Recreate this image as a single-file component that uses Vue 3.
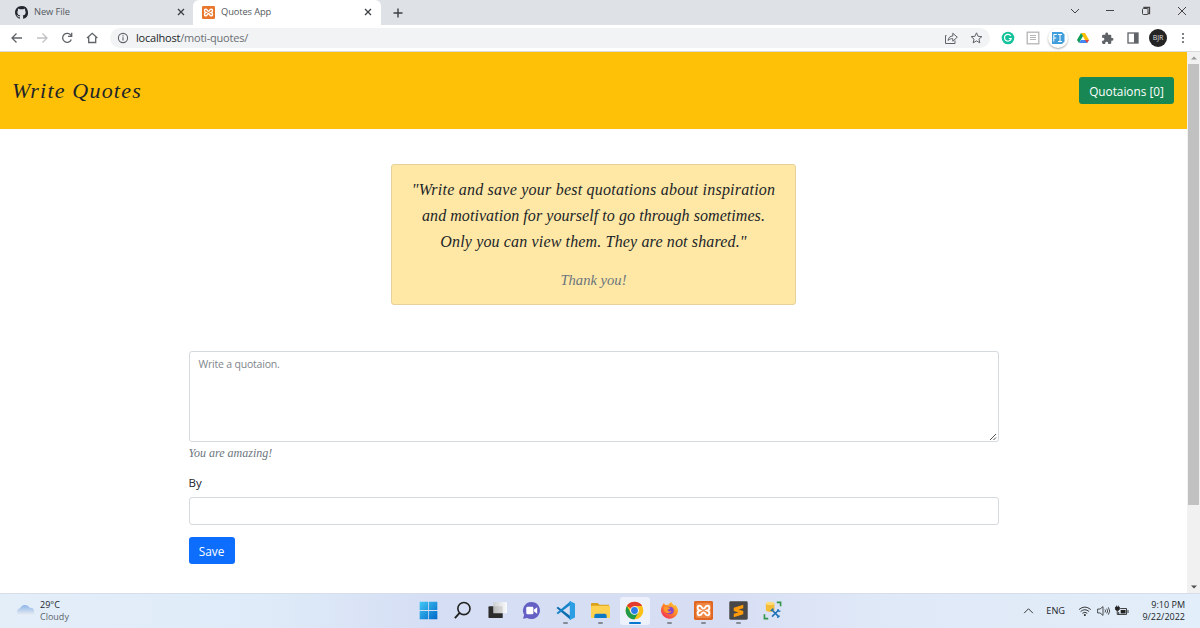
<script setup>
import { ref } from 'vue'

const quoteLines = [
  { text: '"Write and save your best quotations about inspiration', cls: 'l1' },
  { text: 'and motivation for yourself to go through sometimes.', cls: 'l2' },
  { text: 'Only you can view them. They are not shared."', cls: 'l3' }
]
const quotation = ref('')
const author = ref('')
</script>

<template>
  <div class="screen">
    <header class="tabs">
      <div class="tab">
        <svg class="fav" viewBox="0 0 16 16"><path fill="#24292f" d="M8 0C3.58 0 0 3.58 0 8c0 3.54 2.29 6.53 5.47 7.59.4.07.55-.17.55-.38 0-.19-.01-.82-.01-1.49-2.01.37-2.53-.49-2.69-.94-.09-.23-.48-.94-.82-1.13-.28-.15-.68-.52-.01-.53.63-.01 1.08.58 1.23.82.72 1.21 1.87.87 2.33.66.07-.52.28-.87.51-1.07-1.78-.2-3.64-.89-3.64-3.95 0-.87.31-1.59.82-2.15-.08-.2-.36-1.02.08-2.12 0 0 .67-.21 2.2.82a7.6 7.6 0 0 1 4 0c1.53-1.04 2.2-.82 2.2-.82.44 1.1.16 1.92.08 2.12.51.56.82 1.27.82 2.15 0 3.07-1.87 3.75-3.65 3.95.29.25.54.73.54 1.48 0 1.07-.01 1.93-.01 2.2 0 .21.15.46.55.38A8 8 0 0 0 8 0z"/></svg>
        <span class="t1">New File</span>
        <svg class="x" viewBox="0 0 8 8"><path d="M1 1l6 6M7 1L1 7" stroke="#3c4043" stroke-width="1.3"/></svg>
      </div>
      <div class="tab active">
        <svg class="fav" viewBox="0 0 20 20"><rect width="20" height="20" rx="2" fill="#e8762d"/><path d="M7 5.3C3 3.6 3 9 6 10c-3 1-3 6.400 1 4.700C8.300 14 8 12 10 12s1.700 2 3 2.700c4 1.700 4-3.700 1-4.700 3-1 3-6.400-1-4.700C11.700 6 12 8 10 8S8.300 6 7 5.300z" fill="none" stroke="#fff" stroke-width="2.200"/></svg>
        <span class="t2">Quotes App</span>
        <svg class="x" viewBox="0 0 8 8"><path d="M1 1l6 6M7 1L1 7" stroke="#3c4043" stroke-width="1.3"/></svg>
      </div>
      <svg class="plus" viewBox="0 0 10 10"><path d="M5 .5v9M.5 5h9" stroke="#3c4043" stroke-width="1.400"/></svg>
      <svg class="winctl" viewBox="0 0 122 12" fill="none" stroke="#444" stroke-width="1">
        <path d="M1 4l4 4 4-4M36 5.500h8M108 2l8 8M116 2l-8 8"/>
        <rect x="72.500" y="3.500" width="5.500" height="6" rx="1"/><path d="M74 3V2.500h5.500v6H78" stroke-width="1.300"/>
      </svg>
    </header>

    <div class="toolbar">
      <svg class="nav" viewBox="0 0 90 14" fill="none" stroke="#5f6368" stroke-width="1.300">
        <path d="M11 7H1M5.500 2.500L1 7l4.500 4.500"/>
        <path d="M26 7h10M31.500 2.500L36 7l-4.500 4.500" stroke="#bfc1c4"/>
        <path d="M60 4.500A4.500 4.500 0 1 0 60.300 8.500M60.700 1.700v3.600h-3.700"/>
        <path d="M77.700 6.200V11.500h7V6.200M76 7l5.200-4.700L86.400 7"/>
      </svg>
      <div class="address">
        <svg class="info" viewBox="0 0 12 12" fill="none" stroke="#5f6368" stroke-width="1.100"><circle cx="6" cy="6" r="4.600"/><path d="M6 5.300v3.200M6 3.200v1.200"/></svg>
        <span class="url"><b>localhost</b>/moti-quotes/</span>
        <svg class="share" viewBox="0 0 40 14" fill="none" stroke="#5f6368" stroke-width="1">
          <path d="M2.500 4.500H1.500v8h9.500V9.500M4 9.500c.6-3.200 2.300-4.500 4.800-4.500V2.200l4.500 4-4.500 4V7.700C7 7.500 5.500 8 4 9.500z"/>
          <path d="M32.500 1.800l1.550 3.500 3.800.35-2.900 2.500.9 3.700-3.350-1.950-3.350 1.950.9-3.700-2.900-2.500 3.800-.35z"/>
        </svg>
      </div>
      <div class="exts">
        <svg viewBox="0 0 14 14"><circle cx="7" cy="7" r="6.300" fill="#15c39a"/><path d="M9.700 4.800A3.400 3.400 0 1 0 10.200 7.500H7.800" fill="none" stroke="#fff" stroke-width="1.200"/></svg>
        <svg viewBox="0 0 14 14"><rect x="1.200" y="1.200" width="11.600" height="11.600" fill="#fff" stroke="#b5b5b5" stroke-width="1.300"/><path d="M4 4.500h6M4 6.500h6M4 8.500h6" stroke="#b5b5b5"/></svg>
        <div class="fi"><svg viewBox="0 0 14 14"><path d="M1 1h10l2.500 2.500v7L11 13H1z" fill="#429edb"/><path d="M2.800 10.500v-7h3M2.800 7h2.500M7 3.500h4M9 3.500v7M7 10.500h4" fill="none" stroke="#fff"/></svg></div>
        <svg viewBox="0 0 14 14"><path d="M5 2h4l4 7H9z" fill="#fbbc04"/><path d="M5 2L1 9l2 3 4-7z" fill="#0f9d58"/><path d="M5 9h8l-2 3H3z" fill="#4285f4"/><path d="M13 9l-2 3-2-3z" fill="#ea4335"/></svg>
        <svg viewBox="0 0 24 24"><path fill="#5f6368" d="M20.500 11H19V7a2 2 0 0 0-2-2h-4V3.500a2.500 2.500 0 0 0-5 0V5H4a2 2 0 0 0-2 2v3.800h1.500a2.700 2.700 0 0 1 0 5.400H2V20a2 2 0 0 0 2 2h3.800v-1.500a2.700 2.700 0 0 1 5.400 0V22H17a2 2 0 0 0 2-2v-4h1.500a2.500 2.500 0 0 0 0-5z"/></svg>
        <svg viewBox="0 0 14 14"><rect x="2" y="2" width="10" height="10" fill="#fff" stroke="#5f6368" stroke-width="1.300"/><path d="M8 2h4v10H8z" fill="#5f6368"/></svg>
      </div>
      <span class="avatar">BJR</span>
      <svg class="dots" viewBox="0 0 4 12" fill="#5f6368"><circle cx="2" cy="2" r="1.100"/><circle cx="2" cy="6" r="1.100"/><circle cx="2" cy="10" r="1.100"/></svg>
    </div>

    <div class="viewport">
      <main>
        <div class="navbar">
          <h1 class="script">Write Quotes</h1>
          <button class="btn success">Quotaions [0]</button>
        </div>
        <section class="card script">
          <p v-for="l in quoteLines" :key="l.cls"><span :class="l.cls">{{ l.text }}</span></p>
          <p class="thanks"><span>Thank you!</span></p>
        </section>
        <form class="form" @submit.prevent>
          <div class="area">
            <textarea v-model="quotation" placeholder="Write a quotaion."></textarea>
            <svg class="grip" viewBox="0 0 8 8" stroke="#555" stroke-width="1"><path d="M1 7l6-6M4.500 7L7 4.500"/></svg>
          </div>
          <div class="hint script"><span>You are amazing!</span></div>
          <label>By</label>
          <input v-model="author" type="text">
          <button class="btn primary">Save</button>
        </form>
      </main>
      <div class="scroll">
        <svg viewBox="0 0 6 4"><path d="M0 3.500L3 .5l3 3z" fill="#999"/></svg>
        <div class="thumb"></div>
        <svg class="down" viewBox="0 0 6 4"><path d="M0 .5h6l-3 3z" fill="#505050"/></svg>
      </div>
    </div>

    <footer class="taskbar">
      <div class="weather">
        <svg viewBox="0 0 19 12"><defs><linearGradient id="cl" x2="0" y2="1"><stop stop-color="#8db5e8"/><stop offset="1" stop-color="#eceff4"/></linearGradient></defs><path d="M4 11.500A3.700 3.700 0 0 1 4 4.300 5.500 5.500 0 0 1 13.800 3.800 3.900 3.900 0 0 1 15 11.500z" fill="url(#cl)"/></svg>
        <div><span class="deg">29°C</span><span class="cloudy">Cloudy</span></div>
      </div>
      <div class="apps">
        <div class="app"><svg viewBox="0 0 20 20"><defs><linearGradient id="wn" x2="1" y2="1"><stop stop-color="#42c8f5"/><stop offset="1" stop-color="#0067c8"/></linearGradient></defs><path d="M.7.700h8.900v8.900H.7zM10.400.700h8.900v8.900h-8.900zM.7 10.400h8.900v8.900H.7zM10.400 10.400h8.900v8.900h-8.900z" fill="url(#wn)"/></svg></div>
        <div class="app"><svg viewBox="0 0 20 20" fill="none" stroke="#222" stroke-width="1.700"><circle cx="11.500" cy="8" r="6.400"/><path d="M7 12.500L2 18" stroke-width="2"/></svg></div>
        <div class="app"><svg viewBox="0 0 20 20"><defs><linearGradient id="tv" x2="1"><stop stop-color="#ccc"/><stop offset="1" stop-color="#fff"/></linearGradient></defs><rect x=".5" y="5.500" width="15" height="12.500" rx="1" fill="#2c2c2c"/><rect x="5.500" y="1" width="14.500" height="12" rx="1" fill="url(#tv)" opacity=".88"/></svg></div>
        <div class="app"><svg viewBox="0 0 20 20"><path d="M10 1a9 9 0 1 1-4.600 16.800L1 18.700l1.300-4.100A9 9 0 0 1 10 1z" fill="#6560c4"/><rect x="4.500" y="6" width="7.500" height="8" rx="1.500" fill="#fff"/><path d="M12.700 9l3.300-2.500v7L12.700 11z" fill="#fff"/></svg></div>
        <div class="app run"><svg viewBox="0 0 20 20"><path d="M2 6l13.500 10V20L.5 7.300z" fill="#0a6eb0"/><path d="M2 14l13.500-10V0L.5 12.700z" fill="#1684c8"/><path d="M14.500 0L20 2.700v14.600L14.500 20z" fill="#2c9fe4"/></svg></div>
        <div class="app run"><svg viewBox="0 0 20 20"><path d="M0 3a1 1 0 0 1 1-1h6l2 2h10v6H0z" fill="#d9a01d"/><rect y="5" width="20" height="13" rx="1" fill="#ffd150"/><path d="M3.500 18v-2.500a2 2 0 0 1 2-2h9a2 2 0 0 1 2 2V18z" fill="#0d78c4"/></svg></div>
        <div class="app run current"><svg viewBox="0 0 20 20"><circle cx="10" cy="10" r="9.300" fill="#fbc116"/><path d="M10 10L2 5.300A9.300 9.300 0 0 1 18 5.300H10z" fill="#e33b2e"/><path d="M10 10l-4 2.300L2 5.300A9.300 9.300 0 0 0 10 19.300l4-7z" fill="#229a4b"/><circle cx="10" cy="10" r="4.600" fill="#fff"/><circle cx="10" cy="10" r="3.600" fill="#2d7de9"/></svg></div>
        <div class="app run"><svg viewBox="0 0 20 20"><defs><linearGradient id="ff" x1="1" x2=".2" y2="1"><stop stop-color="#ffe23c"/><stop offset=".5" stop-color="#ff8b26"/><stop offset="1" stop-color="#f22c5a"/></linearGradient></defs><path d="M3 4l1-2 1.500 2.200L9 4c1-2.500 3-3.300 3-3.300 0 2 2 2.300 3 4.300l1-1c2 2 3 4 3 6.500A9 9 0 1 1 3 4z" fill="url(#ff)"/><circle cx="10.500" cy="10" r="4" fill="#8b45cb"/><path d="M4 6.500c3-1.500 4 .5 7 .5-1 2-3 1.500-3 3 1 1.500 3 1 4 .5-1 3-7 3-8-1z" fill="#ff9928"/></svg></div>
        <div class="app run"><svg viewBox="0 0 20 20"><rect width="20" height="20" rx="1.500" fill="#df6721"/><rect x="2" y="2" width="16" height="16" rx="2" fill="#f08644"/><path d="M7 5.300C3 3.600 3 9 6 10c-3 1-3 6.400 1 4.700C8.300 14 8 12 10 12s1.700 2 3 2.700c4 1.700 4-3.700 1-4.700 3-1 3-6.400-1-4.700C11.700 6 12 8 10 8S8.300 6 7 5.300z" fill="none" stroke="#fff" stroke-width="2"/></svg></div>
        <div class="app run"><svg viewBox="0 0 20 20"><rect x=".3" y=".3" width="19.400" height="19.400" rx="1.500" fill="#474747"/><path d="M15 4v3.500L10 9l5 1.500V14L5 17v-3.500L10 12 5 10.500V7z" fill="#ff9a0a"/></svg></div>
        <div class="app"><svg viewBox="0 0 20 20"><path d="M3 2.500v7c0 2.500 9 2.500 9 0v-7z" fill="#f5bd37"/><ellipse cx="7.500" cy="2.500" rx="4.500" ry="1.800" fill="#ffdc76"/><path d="M14.500 1.500h4v4M1.500 14v4.500h4" fill="none" stroke="#329548" stroke-width="1.700"/><path d="M9.500 9.500l7 7M16.500 9.500l-7 7" fill="none" stroke="#1e72b8" stroke-width="1.700"/><path d="M8 10.500l3-2.500M15.500 8.500l.5 2 2.300.3M15 17.500l2.500-2" fill="none" stroke="#1e72b8" stroke-width="1.500"/></svg></div>
      </div>
      <div class="tray">
        <svg class="chev" viewBox="0 0 12 8"><path d="M1 7l5-5 5 5" fill="none" stroke="#333" stroke-width="1.100"/></svg>
        <span class="eng">ENG</span>
        <svg class="sys" viewBox="0 0 52 14" fill="none" stroke="#222">
          <path d="M1 5.500q6-5 12 0M2.700 7.500q4.300-3.600 8.600 0M4.500 9.300q2.500-2 5 0" stroke-width=".9"/><circle cx="7" cy="11" r="1" fill="#222" stroke="none"/>
          <path d="M20 5h2.500L25.500 2.500v9l-3-2.500H20zM27.500 5.500q1.200 1.500 0 3M29.300 4.500q1.900 2.500 0 5M31 3.300q2.600 3.700 0 7.400" stroke-width=".8"/>
          <path d="M43 4.500h6.500v6h-8V8" stroke-width=".9"/><path d="M43.500 6h5v3.500h-5z" fill="#222" stroke="none"/><path d="M51 6v3M40 7v3.500h2" stroke-width=".9"/><path d="M38.200 3h4v2.500q-2 2.500-4 0zM39.300 1.500V3M41.100 1.500V3" fill="#222" stroke-width=".8"/>
        </svg>
        <div class="clock"><span class="time">9:10 PM</span><span class="date">9/22/2022</span></div>
      </div>
    </footer>
  </div>
</template>

<style>
html, body { margin: 0; overflow: hidden; }
</style>
<style scoped>
* { box-sizing: border-box; }
.screen { width: 1200px; height: 628px; display: flex; flex-direction: column; overflow: hidden; background: #fff; font-family: "Open Sans", "Noto Sans", sans-serif; color: #212529; }
svg { display: block; flex: none; }
span { white-space: nowrap; }
.tabs { height: 25px; flex: none; background: #dee1e6; display: flex; align-items: center; }
.tab { width: 193px; height: 25px; padding: 0 8px 1px 15px; display: flex; align-items: center; color: #55595e; font-size: 9.300px; }
.tab.active { width: 188px; padding-left: 9px; background: #fff; border-radius: 6px 6px 0 0; }
.tab span { margin-top: -1px; letter-spacing: -.1px; }
.fav { width: 13px; height: 13px; margin-right: 6px; }
.x { width: 8px; height: 8px; margin-left: auto; }
.tab.active .x { margin-right: 1px; }
.plus { width: 10px; height: 10px; margin-left: 12px; }
.winctl { width: 122px; height: 12px; margin-left: auto; margin-right: 8px; margin-bottom: 3px; }
.toolbar { height: 27px; flex: none; display: flex; align-items: center; padding-left: 11px; border-bottom: 1px solid #d9dadb; }
.nav { width: 90px; height: 14px; }
.address { width: 880px; height: 20px; margin-left: 9px; border-radius: 10px; background: #f1f3f4; display: flex; align-items: center; padding: 0 7px; }
.info { width: 12px; height: 12px; margin-right: 7px; }
.url { font-size: 11px; color: #6b6f73; letter-spacing: -.21px; margin-top: -2px; }
.url b { font-weight: 400; color: #222529; }
.share { width: 40px; height: 14px; margin-left: auto; margin-right: -1px; }
.exts { display: flex; align-items: center; gap: 11px; margin-left: 11px; }
.exts svg { width: 14px; height: 14px; }
.exts > svg:nth-child(5) { width: 13px; height: 13px; margin-right: 1px; }
.fi { width: 20px; height: 20px; margin: 0 -3px; border-radius: 50%; display: grid; place-items: center; box-shadow: 0 1px 2px #aaa; }
.avatar { width: 18px; height: 18px; margin-left: 9px; border-radius: 50%; background: #242424; color: #ddd; font-size: 7px; line-height: 17px; text-align: center; }
.dots { width: 4px; height: 12px; margin-left: 14px; }
.viewport { height: 541px; flex: none; display: flex; }
main { width: 1187px; }
.navbar { height: 77px; background: #ffc107; display: flex; align-items: center; justify-content: space-between; padding: 0 13px 0 12px; }
.script { font-family: "Liberation Serif", serif; font-style: italic; }
h1 { font-size: 22px; font-weight: 400; margin: 0; letter-spacing: 1.2px; white-space: nowrap; }
.btn { border: 0; border-radius: 3px; color: #fff; font-family: inherit; height: 27px; padding: 0; font-size: 11.800px; }
.success { width: 95px; background: #198754; }
.card { width: 405px; height: 141px; margin: 35px auto 0 391px; border: 1px solid #e6d298; border-radius: 3px; background: #ffe8a5; text-align: center; padding-top: 12px; }
.card p { margin: 0; height: 26px; line-height: 26px; font-size: 16px; white-space: nowrap; }
.l1 { letter-spacing: .23px; }
.l2 { letter-spacing: .06px; }
.l3 { letter-spacing: .15px; }
.card .thanks { margin-top: 12px; color: #6c757d; font-size: 14.600px; }
.form { width: 810px; margin: 46px 0 0 188.500px; }
.area { position: relative; height: 91px; }
textarea, input { display: block; width: 810px; border: 1px solid #d5dade; border-radius: 3px; font: 10.500px "Open Sans", "Noto Sans", sans-serif; letter-spacing: -.2px; padding: 5px 9px; outline: 0; background: #fff; resize: none; }
textarea { height: 91px; }
textarea::placeholder { color: #80868b; opacity: 1; }
.grip { position: absolute; right: 2px; bottom: 1px; width: 8px; height: 8px; }
.hint { height: 24px; line-height: 23px; font-size: 12px; color: #6c757d; }
label { display: block; height: 31px; line-height: 34px; font-size: 11.500px; }
input { height: 28px; }
.primary { display: block; width: 46px; margin-top: 12px; background: #0d6efd; }
.scroll { width: 13px; background: #f1f1f1; display: flex; flex-direction: column; align-items: center; }
.scroll svg { width: 6px; height: 4px; margin-top: 4px; }
.thumb { width: 11px; height: 441px; margin-top: 4px; background: #c1c1c1; }
.scroll .down { margin-top: auto; margin-bottom: 4px; }
.taskbar { height: 35px; flex: none; border-top: 1px solid #d7dee9; background: linear-gradient(90deg, #e3eef9 0, #dfebf8 22%, #d5def4 36%, #d7def4 60%, #dfe8f7 72%, #e2eef9 100%); display: grid; grid-template-columns: 411px 379px 1fr; }
.weather { display: flex; align-items: center; padding-left: 16px; gap: 5px; }
.weather svg { width: 19px; height: 12px; margin-bottom: 2px; }
.weather div, .clock { display: flex; flex-direction: column; font-size: 9px; line-height: 12px; }
.cloudy { color: #5d646b; }
.apps { display: flex; }
.app { width: 34.450px; display: flex; flex-direction: column; align-items: center; padding-top: 7px; position: relative; }
.app svg { width: 19px; height: 19px; z-index: 1; }
.run::after { content: ""; width: 5px; height: 2px; margin-top: 2px; border-radius: 1px; background: #858b96; z-index: 1; }
.current::before { content: ""; position: absolute; left: 2px; top: 3px; width: 30px; height: 28px; border-radius: 3px; background: #edf1fb; }
.current::after { width: 12px; background: #0877cf; }
.tray { display: flex; align-items: center; justify-content: flex-end; padding-right: 15px; font-size: 9px; }
.tray > span, .tray > svg { margin-bottom: 1px; }
.chev { width: 11px; height: 7px; margin-right: 12px; }
.sys { width: 51px; height: 14px; margin-left: 13px; margin-right: 10px; }
.clock { width: 46px; align-items: flex-end; }
.eng { font-size: 9.200px; }
</style>
